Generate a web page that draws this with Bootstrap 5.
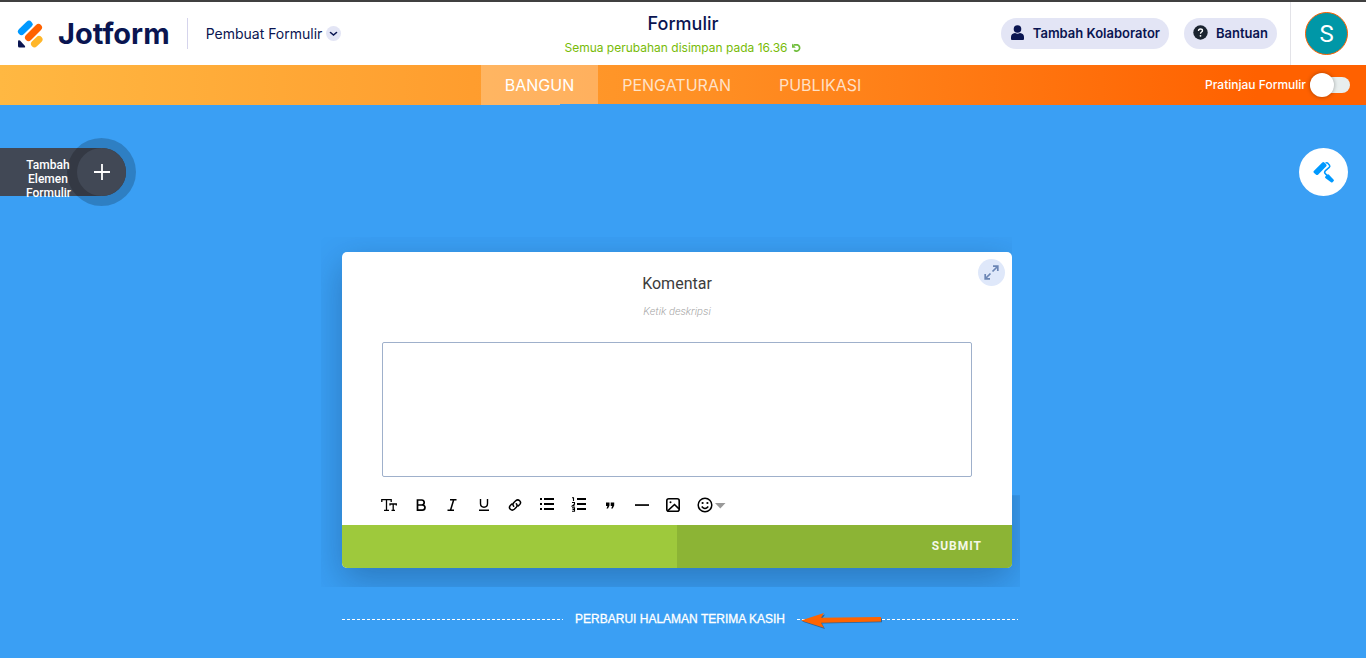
<!DOCTYPE html>
<html lang="id">
<head>
<meta charset="utf-8">
<meta name="viewport" content="width=device-width, initial-scale=1">
<title>Formulir - Jotform</title>
<link href="https://cdn.jsdelivr.net/npm/bootstrap@5.3.0/dist/css/bootstrap.min.css" rel="stylesheet">
<style>
  :root { --navy: #0a1551; --sky: #3a9ff4; --pill: #e3e5f5; }
  body { font-family: Inter, "Liberation Sans", sans-serif; background: var(--sky); }
  svg { display: block; flex: none; }
  .topbar { height: 65px; border-top: 2px solid #404040; background: #fff; color: var(--navy); }
  .brand { padding: 0 17px; gap: 13px; }
  .brand-text { font-size: 29px; line-height: 32px; font-weight: 700; color: var(--navy); }
  .product { height: 31px; border: 0; border-left: 1px solid #d5d4ec; background: none; font-size: 14px; line-height: 20px; color: var(--navy); padding: 0 18px; }
  .doc-title { font-size: 18px; line-height: 24px; font-weight: 500; padding-top: 10px; }
  .saved { font-size: 12px; line-height: 24px; color: #78bb07; }
  .pill-btn { --bs-btn-bg: var(--pill); --bs-btn-hover-bg: #d4d7ee; --bs-btn-color: var(--navy); --bs-btn-font-size: 13px; --bs-btn-font-weight: 600; --bs-btn-border-width: 0; height: 31px; padding: 0 9px 2px; line-height: 20px; }
  .actions { gap: 15px; padding-right: 13px; }
  .account { border-left: 1px solid #e3e3e8; padding: 0 18px 0 14px; }
  .avatar { width: 43px; height: 43px; border: 1px solid #ff6100; background: #0097a7; color: #fff; font: 24px/24px Roboto, sans-serif; padding: 0; }
  .modebar { position: relative; height: 40px; background: linear-gradient(90deg, #ffb842, #ff9125 50%, #ff6100 92%); }
  .modebar::after { content: ""; position: absolute; left: 41%; right: 40%; bottom: 0; height: 1px; background: var(--sky); }
  .mode { padding: 0 24px; line-height: 40px; font-size: 16px; color: rgba(255,255,255,.75); text-decoration: none; }
  .mode.active { color: #fff; background: rgba(255,255,255,.25); }
  .preview-label { font-size: 12px; line-height: 16px; font-weight: 500; color: #fff; }
  .preview-switch { appearance: none; position: relative; width: 40px; height: 16px; margin: 0; border-radius: 8px; background: #e8eeee; }
  .preview-switch::before { content: ""; position: absolute; left: 0; top: -4px; width: 24px; height: 24px; border-radius: 50%; background: #fff; box-shadow: 0 0 4px rgba(0,0,0,.35); }
  .tools { padding-top: 43px; }
  .add-element { height: 48px; padding: 0; border: 0; border-radius: 0 24px 24px 0; background: #414855; color: #fff; font: 500 12px/14px Roboto, sans-serif; }
  .add-element span { position: relative; z-index: 1; width: 44px; margin: 10px 7px 0 26px; }
  .add-element i { width: 49px; height: 48px; border-radius: 50%; background: #414855; box-shadow: 0 0 0 10px rgba(0,0,0,.2); }
  .design-btn { width: 49px; height: 48px; margin-right: 18px; border: 0; border-radius: 50%; background: #fff; padding: 0; }
  .workspace { width: 100%; max-width: 682px; padding: 56px 6px 0 0; }
  .builder { padding-right: 6px; }
  .question { border: 0; border-radius: 5px; box-shadow: 0 12px 36px rgba(10,30,60,.3); font-family: Roboto, sans-serif;
    clip-path: polygon(-21px -15px, 100% -15px, 100% 77%, calc(100% + 8px) 77%, calc(100% + 8px) calc(100% + 19px), -21px calc(100% + 19px)); }
  .question-body { padding: 20px 40px 12px; }
  .question-title { font-size: 16px; line-height: 24px; color: #3c3c3c; margin: 0 0 7px; font-weight: 400; }
  .question-note { font-size: 11px; line-height: 18px; font-style: italic; font-weight: 300; color: #a5a5a5; margin: 0 0 21px; }
  .answer { display: block; width: 100%; height: 135px; border: 1px solid #9fb0cb; border-radius: 2px; resize: none; margin-bottom: 20px; }
  .expand { position: absolute; right: 7px; top: 7px; width: 27px; height: 27px; border: 0; border-radius: 50%; background: #dfe8fa; padding: 0; }
  .format { width: 330px; }
  .format button, .caret { border: 0; background: none; padding: 0; width: 16px; height: 16px; color: #000; }
  .format button { width: 14px; }
  .format svg { margin: 0 -1px; }
  .progress-foot { height: 43px; background: #9ec93c; border-radius: 0 0 5px 5px; overflow: hidden; }
  .submit { border: 0; border-radius: 0; background: #8cb435; color: #f4f8e8; font-size: 12px; font-weight: 700; letter-spacing: 1px; text-align: right; padding: 0 30px 2px; }
  .thanks { padding-top: 43px; }
  .thanks a { font: 12px/16px "Liberation Sans", sans-serif; color: #fff; text-decoration: none; -webkit-text-stroke: 0.3px #fff; padding: 0 12px; }
  .rule { flex: 1; height: 1px; background: repeating-linear-gradient(90deg, #fff 0 3px, transparent 3px 5px); }
  .pointer { position: absolute; left: 4px; top: -9px; }
</style>
</head>
<body class="d-flex flex-column min-vh-100">
<header class="topbar row g-0 flex-nowrap">
  <div class="col d-flex align-items-center">
    <a href="#" class="brand d-flex align-items-center text-decoration-none">
      <svg width="28" height="30" viewBox="1 1 28 30" aria-hidden="true">
        <g stroke-linecap="round" stroke-width="7">
          <path d="M5.500 13.500 13 6.300" stroke="#09f"/>
          <path d="M12.500 19.500 22.500 9.500" stroke="#ff6100"/>
          <path d="M18.500 25.800 23 21.500" stroke="#ffb629"/>
        </g>
        <path d="M2 23.500q0-2 2-1l5 5.500q.5 1.500-.5 1.500H3.500q-1.500 0-1.500-1.500z" fill="#0a1551"/>
      </svg>
      <span class="brand-text">Jotform</span>
    </a>
    <button class="product d-flex align-items-center">Pembuat Formulir
      <svg class="ms-1" width="15" height="15" viewBox="0 0 15 15"><circle cx="7.500" cy="7.500" r="7.500" fill="#e3e5f5"/><path d="m4.500 6.500 3 2.500 3-2.500" fill="none" stroke="#0a1551" stroke-width="1.600" stroke-linecap="round"/></svg>
    </button>
  </div>
  <div class="col-auto text-center">
    <div class="doc-title">Formulir</div>
    <div class="saved d-flex align-items-center">Semua perubahan disimpan pada 16.36
      <svg class="ms-1" width="10" height="10" viewBox="0 0 10 10" fill="none" stroke="#70bd3c" stroke-width="1.700"><path d="M1.500 1.900h4a3.200 3.200 0 1 1-3.300 5.300"/><path d="M0 .5v4.300h3.800z" fill="#70bd3c" stroke="none"/></svg>
    </div>
  </div>
  <div class="col d-flex justify-content-end">
    <div class="actions d-flex align-items-center">
      <button class="btn pill-btn rounded-pill d-flex align-items-center gap-2">
        <svg width="15" height="15" viewBox="0 0 15 15" fill="#0a1551"><circle cx="7.500" cy="4" r="3.800"/><path d="M1 14v-2q0-3.500 4-4 2.500 1.500 5 0 4 .5 4 4v2q0 1-1 1H2q-1 0-1-1z"/></svg>
        Tambah Kolaborator</button>
      <button class="btn pill-btn rounded-pill d-flex align-items-center gap-2">
        <svg width="15" height="15" viewBox="0 0 15 15"><circle cx="7.500" cy="7.500" r="7.200" fill="#1b2430"/><path d="M5.500 6q0-2 2-2t2 1.700c0 1.300-2 1.300-2 3" fill="none" stroke="#fff" stroke-width="1.300"/><circle cx="7.500" cy="10.800" r=".9" fill="#fff"/></svg>
        Bantuan</button>
    </div>
    <div class="account d-flex align-items-center"><button class="avatar rounded-circle">S</button></div>
  </div>
</header>
<nav class="modebar row g-0 flex-nowrap">
  <div class="col"></div>
  <div class="col-auto d-flex">
    <a class="mode active" href="#">BANGUN</a>
    <a class="mode" href="#">PENGATURAN</a>
    <a class="mode" href="#">PUBLIKASI</a>
  </div>
  <div class="col">
    <div class="d-flex justify-content-end align-items-center gap-1 h-100 pe-3">
      <label class="preview-label" for="preview">Pratinjau Formulir</label>
      <input class="preview-switch" type="checkbox" role="switch" id="preview">
    </div>
  </div>
</nav>
<main class="flex-fill">
  <div class="tools d-flex justify-content-between">
    <button class="add-element d-flex">
      <span>Tambah Elemen Formulir</span>
      <i class="d-flex align-items-center justify-content-center"><svg width="16" height="16" viewBox="0 0 16 16" stroke="#fff" stroke-width="1.800"><path d="M8 0v16M0 8h16"/></svg></i>
    </button>
    <button class="design-btn d-flex align-items-center justify-content-center" aria-label="Desainer formulir">
      <svg width="22" height="22" viewBox="0 0 22 22" fill="#09f"><path d="M.800 10 9.300 1.500q1-.8 2 0l2 2.100q.7.900 0 1.700L5 13.700q-1 .8-1.900 0L.800 11.700q-.8-.8 0-1.700z"/><path d="M12.500 2.200q1.500-.8 2.500.2l1.500 1.800q.8 1.200-.3 2.200l-4 3.500q-1.300 1.500.3 3l1.700 1.700" fill="none" stroke="#09f" stroke-width="1.500"/><path d="m12.300 15.500 2.200-2q.8-.4 1.500.2l4.700 5q.5.700 0 1.400l-1.200 1.200q-.8.500-1.500 0l-5.700-4.300q-.6-.7 0-1.500z"/></svg>
    </button>
  </div>
  <div class="workspace mx-auto">
    <div class="builder">
      <section class="question card">
        <button class="expand d-flex align-items-center justify-content-center" aria-label="Perluas">
          <svg width="15" height="15" viewBox="0 0 15 15" fill="none" stroke="#6c86b5" stroke-width="1.700"><path d="M9 1.200h4.800V6M13.500 1.500 8.500 6.500M6 13.800H1.200V9M1.500 13.500l5-5"/></svg>
        </button>
        <div class="question-body">
          <h1 class="question-title text-center"><label for="answer">Komentar</label></h1>
          <p class="question-note text-center">Ketik deskripsi</p>
          <textarea class="answer" id="answer"></textarea>
          <div class="d-flex">
            <div class="format d-flex justify-content-between">
              <button aria-label="Ukuran"><svg width="16" height="16" viewBox="0 0 16 16" fill="none" stroke="#000" stroke-width="1.300"><path d="M.800 5V2.700h9.400V5M5.500 2.700v10.600M3 13.300h5M9 8.500V7h6.300v1.500M12.200 7v6.300M10.500 13.300H14"/></svg></button>
              <button aria-label="Tebal"><svg width="16" height="16" viewBox="0 0 16 16" fill="none" stroke="#000" stroke-width="1.700"><path d="M4.500 3h4.200q2.500.1 2.500 2.400T8.700 8H4.500zM4.500 8h4.700q2.800.1 2.800 2.600T9.200 13.200H4.500z"/></svg></button>
              <button aria-label="Miring"><svg width="16" height="16" viewBox="0 0 16 16" fill="none" stroke="#000" stroke-width="1.500"><path d="M6 2.700h6.500M3.500 13.300H10M9.700 2.700 6.500 13.300"/></svg></button>
              <button aria-label="Garis bawah"><svg width="16" height="16" viewBox="0 0 16 16" fill="none" stroke="#000" stroke-width="1.400"><path d="M4.500 2v4.500q0 3.700 3.500 3.700t3.500-3.700V2M3 13.300h10"/></svg></button>
              <button aria-label="Tautan"><svg width="16" height="16" viewBox="0 0 16 16" fill="none" stroke="#000" stroke-width="1.500" stroke-linecap="round"><path d="M6.700 9.300c-1.500-1.700-.7-2.700 0-3.500l2-2c2.800-2.400 6.400 1 4 3.800L11.200 9M9.300 6.700c1.500 1.700.7 2.700 0 3.500l-2 2c-2.800 2.400-6.400-1-4-3.800L4.800 7"/></svg></button>
              <button aria-label="Daftar"><svg width="16" height="16" viewBox="0 0 16 16" fill="#000"><path d="M1 1h2v2H1zM1 6h2v2H1zM1 11h2v2H1zM5 1h10v2H5zM5 6h10v2H5zM5 11h10v2H5z"/></svg></button>
              <button aria-label="Daftar bernomor"><svg width="16" height="16" viewBox="0 0 16 16"><path d="M6 1h9v2H6zM6 6h9v2H6zM6 11h9v2H6z"/><path d="M1 .8h1.500V4M1 5.500h2.500v1.700L1.200 9h2.600M1 10.700h2.500v3.500H1M1.500 12.400h2" fill="none" stroke="#000" stroke-width="1.100"/></svg></button>
              <button aria-label="Kutipan"><svg width="16" height="16" viewBox="0 0 16 16"><path d="M4 5.500h3.500v3L6 11.500H4.500L5.500 9H4zM8.700 5.500h3.500v3l-1.500 3H9.200l1-2.500H8.700z"/></svg></button>
              <button aria-label="Garis"><svg width="16" height="16" viewBox="0 0 16 16"><path d="M1 7.200h14v1.700H1z"/></svg></button>
              <button aria-label="Gambar"><svg width="16" height="16" viewBox="0 0 16 16" fill="none" stroke="#000" stroke-width="1.600"><rect x="1.800" y="1.800" width="12.400" height="12.400" rx="2"/><path d="m2.500 14 7-6.500 4.500 4.300"/><circle cx="5.500" cy="5.300" r="1" fill="#000" stroke="none"/></svg></button>
              <button aria-label="Emoji"><svg width="16" height="16" viewBox="0 0 16 16" fill="none" stroke="#000" stroke-width="1.500"><circle cx="8" cy="8" r="6.800"/><path d="M4.700 9.500q3.300 4 6.600 0"/><g fill="#000" stroke="none"><circle cx="5.600" cy="6" r="1.100"/><circle cx="10.400" cy="6" r="1.100"/></g></svg></button>
            </div>
            <button class="caret" aria-label="Lainnya"><svg width="16" height="16" viewBox="0 0 16 16"><path d="M3 6h10.500L8.300 11.500z" fill="#999"/></svg></button>
          </div>
        </div>
        <div class="progress-foot d-flex">
          <div class="w-50"></div>
          <button class="submit w-50">SUBMIT</button>
        </div>
      </section>
    </div>
    <div class="thanks d-flex align-items-center">
      <span class="rule"></span>
      <a href="#">PERBARUI HALAMAN TERIMA KASIH</a>
      <span class="rule position-relative">
        <svg class="pointer" width="82" height="20" viewBox="0 0 82 20"><path d="M1 11.500 24 19l-3-5.500 60-1.300V8.500L21 9l3-4.500z" fill="#2b6498"/><path d="M0 10.500 23 3l-3 4.700 60-.7v4.500L20 12.700l3 5z" fill="#ff6400"/></svg>
      </span>
    </div>
  </div>
</main>
<script src="https://cdn.jsdelivr.net/npm/bootstrap@5.3.0/dist/js/bootstrap.bundle.min.js"></script>
</body>
</html>
